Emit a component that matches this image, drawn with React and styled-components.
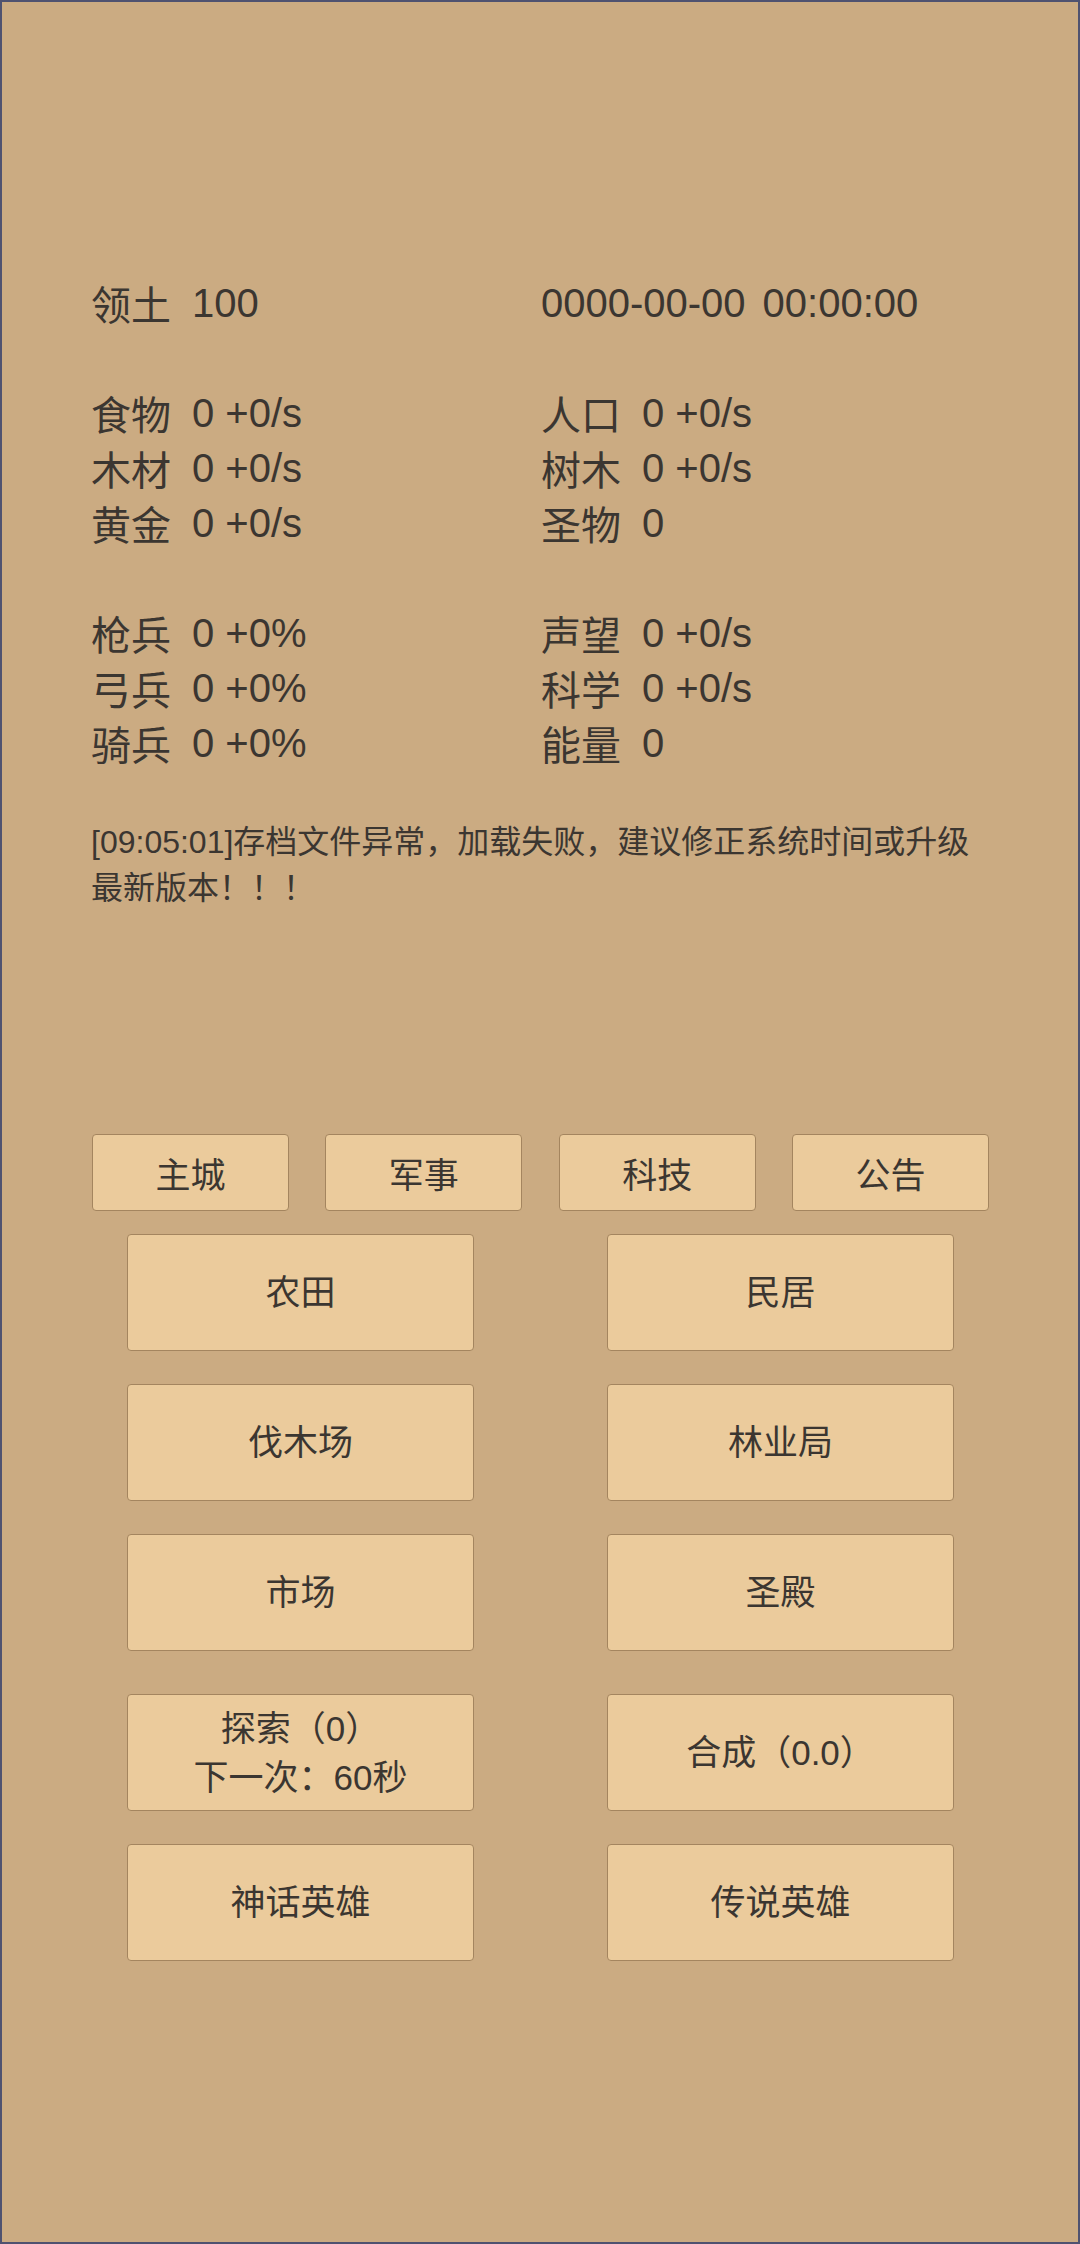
import React from "react";
import styled, { createGlobalStyle } from "styled-components";

const GlobalStyle = createGlobalStyle`
  html, body {
    margin: 0;
    padding: 0;
    background: #cbab82;
  }
  body {
    font-family: "Liberation Sans", "Noto Sans CJK SC", sans-serif;
    color: #3b3631;
  }
`;

const resources = [
  ["食物", "0 +0/s"],
  ["人口", "0 +0/s"],
  ["木材", "0 +0/s"],
  ["树木", "0 +0/s"],
  ["黄金", "0 +0/s"],
  ["圣物", "0"],
];

const army = [
  ["枪兵", "0 +0%"],
  ["声望", "0 +0/s"],
  ["弓兵", "0 +0%"],
  ["科学", "0 +0/s"],
  ["骑兵", "0 +0%"],
  ["能量", "0"],
];

const tabs = ["主城", "军事", "科技", "公告"];

const buildingRows = [
  { items: [["农田"], ["民居"]] },
  { items: [["伐木场"], ["林业局"]] },
  { items: [["市场"], ["圣殿"]] },
  { items: [["探索（0）", "下一次：60秒"], ["合成（0.0）"]], lift: true },
  { items: [["神话英雄"], ["传说英雄"]] },
];

const App = () => {
  return (
    <>
      <GlobalStyle />
      <Screen>
        <Content>
          <StatGrid>
            <Stat>
              <Label>领土</Label>
              <Value>100</Value>
            </Stat>
            <Stat $tight>
              <Value>0000-00-00</Value>
              <Value>00:00:00</Value>
            </Stat>
          </StatGrid>

          <StatGrid $spaced>
            {resources.map(([label, value]) => (
              <Stat key={label}>
                <Label>{label}</Label>
                <Value>{value}</Value>
              </Stat>
            ))}
          </StatGrid>

          <StatGrid $spaced>
            {army.map(([label, value]) => (
              <Stat key={label}>
                <Label>{label}</Label>
                <Value>{value}</Value>
              </Stat>
            ))}
          </StatGrid>

          <LogBox>
            [09:05:01]存档文件异常，加载失败，建议修正系统时间或升级最新版本！！！
          </LogBox>

          <TabBar>
            {tabs.map((tab) => (
              <TabButton key={tab}>{tab}</TabButton>
            ))}
          </TabBar>

          <BuildingList>
            {buildingRows.map((row, i) => (
              <BuildingRow key={i} $lift={row.lift}>
                {row.items.map((lines) => (
                  <BuildingButton key={lines[0]}>
                    {lines.map((line) => (
                      <span key={line}>{line}</span>
                    ))}
                  </BuildingButton>
                ))}
              </BuildingRow>
            ))}
          </BuildingList>
        </Content>
      </Screen>
    </>
  );
};

const Screen = styled.div`
  width: 1080px;
  height: 2244px;
  box-sizing: border-box;
  border: 2px solid #4f5270;
  background: #cbab82;
  padding-top: 274px;
  overflow: hidden;
`;

const Content = styled.div`
  margin-left: 89px;
  width: 898px;
`;

const StatGrid = styled.div`
  display: grid;
  grid-template-columns: 450px 450px;
  grid-auto-rows: 55px;
  margin-top: ${(p) => (p.$spaced ? "55px" : "0")};
  font-size: 40px;
  line-height: 55px;
`;

const Stat = styled.div`
  display: flex;
  gap: ${(p) => (p.$tight ? "17px" : "21px")};
  white-space: nowrap;
`;

const Label = styled.span`
  font-family: "Noto Sans CJK SC", sans-serif;
`;

const Value = styled.span`
  font-family: "Liberation Sans", "Noto Sans CJK SC", sans-serif;
`;

const LogBox = styled.div`
  margin-top: 48px;
  min-height: 315px;
  font-size: 32px;
  line-height: 46px;
  box-sizing: border-box;
`;

const TabBar = styled.div`
  display: flex;
  justify-content: space-between;
  width: 897px;
  margin-left: 1px;
`;

const ButtonBase = styled.button`
  box-sizing: border-box;
  background: #ebcb9c;
  border: 1px solid #a4855f;
  border-radius: 4px;
  color: #3b3631;
  font-family: "Liberation Sans", "Noto Sans CJK SC", sans-serif;
  font-size: 35px;
  padding: 0;
  cursor: pointer;
`;

const TabButton = styled(ButtonBase)`
  width: 197px;
  height: 77px;
`;

const BuildingList = styled.div`
  display: flex;
  flex-direction: column;
  gap: 33px;
  margin-top: 23px;
  margin-left: 36px;
`;

const BuildingRow = styled.div`
  display: flex;
  gap: 133px;
  margin-top: ${(p) => (p.$lift ? "10px" : "0")};
`;

const BuildingButton = styled(ButtonBase)`
  width: 347px;
  height: 117px;
  display: flex;
  flex-direction: column;
  align-items: center;
  justify-content: center;
  line-height: 49px;
`;

export default App;
